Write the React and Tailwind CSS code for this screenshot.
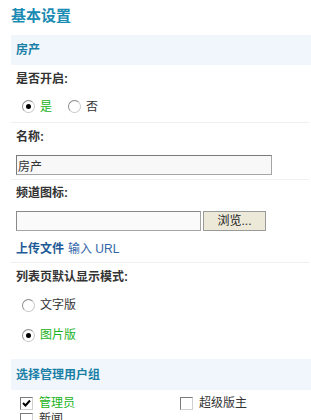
import { useState } from 'react';

function Radio({ checked, onClick }) {
  return (
    <span
      onClick={onClick}
      className="relative inline-block w-[13px] h-[13px] rounded-full border border-[#c8c8c8] bg-white cursor-pointer"
      style={{ borderTopColor: '#8a8a8a', borderLeftColor: '#8a8a8a' }}
    >
      {checked && <span className="absolute left-[3px] top-[3px] w-[5px] h-[5px] rounded-full bg-black" />}
    </span>
  );
}

function Check({ checked, onClick }) {
  return (
    <span
      onClick={onClick}
      className="relative inline-flex items-center justify-center w-[13px] h-[13px] border border-[#d0d0d0] bg-white cursor-pointer"
      style={{ borderTopColor: '#7a7a7a', borderLeftColor: '#7a7a7a' }}
    >
      {checked && (
        <svg width="9" height="9" viewBox="0 0 9 9">
          <path d="M1 4 L3.5 6.5 L8 1.5" fill="none" stroke="#000" strokeWidth="2" />
        </svg>
      )}
    </span>
  );
}

function App() {
  const [open, setOpen] = useState(true);
  const [mode, setMode] = useState('pic');
  const [groups, setGroups] = useState({ admin: true, super: false, news: false });

  const font = { fontFamily: '"Liberation Sans", "Noto Sans CJK SC", sans-serif' };

  return (
    <div className="w-[311px] h-[420px] overflow-hidden bg-white text-[12px] text-[#333]" style={font}>
      <div className="pl-[11px]">
        <h1 className="pt-[7px] h-[35px] text-[15px] font-bold text-[#1a8bb3] leading-[17px]">基本设置</h1>

        {/* 房产 */}
        <div className="h-[30px] bg-[#f0f6fc] pl-[5px] flex items-center text-[12px] font-bold text-[#1a7fa6]">房产</div>

        <div className="pl-[5px]">
          <div className="pt-[1px] h-[26px] font-bold flex items-center">是否开启:</div>
          <div className="h-[31px] flex items-center pl-[6px] gap-[5px]">
            <Radio checked={open} onClick={() => setOpen(true)} />
            <span className={open ? 'text-[#1bb31b] mr-[11px]' : 'mr-[11px]'}>是</span>
            <Radio checked={!open} onClick={() => setOpen(false)} />
            <span className={!open ? 'text-[#1bb31b]' : ''}>否</span>
          </div>
        </div>
        <div className="h-px bg-[#f0f0f0] mr-[2px]" />

        <div className="pl-[5px]">
          <div className="h-[28px] flex items-center font-bold">名称:</div>
          <div className="h-[28px] flex items-center">
            <input
              defaultValue="房产"
              className="w-[256px] h-[20px] border border-[#a5a5a5] bg-[#f8f8f8] px-[1px] text-[12px] text-[#333] outline-none"
              style={{ borderTopColor: '#7a7a7a', borderLeftColor: '#7a7a7a' }}
            />
          </div>
        </div>
        <div className="h-px bg-[#f0f0f0] mr-[2px]" />

        <div className="pl-[5px]">
          <div className="h-[26px] flex items-center font-bold">频道图标:</div>
          <div className="h-[30px] flex items-center gap-[2px]">
            <input
              className="w-[185px] h-[20px] border border-[#a5a5a5] bg-[#fafafa] outline-none"
              style={{ borderTopColor: '#8a8a8a', borderLeftColor: '#8a8a8a' }}
            />
            <button className="w-[63px] h-[20px] border border-[#9a9a9a] bg-[#ece9d8] text-[12px] text-[#222] leading-none">浏览...</button>
          </div>
          <div className="h-[26px] flex items-center gap-[4px]">
            <a className="font-bold text-[#1d5a96] cursor-pointer">上传文件</a>
            <a className="text-[#3366a8] cursor-pointer">输入 URL</a>
          </div>
        </div>
        <div className="h-px bg-[#f0f0f0] mr-[2px]" />

        <div className="pl-[5px]">
          <div className="h-[28px] flex items-center font-bold">列表页默认显示模式:</div>
          <div className="h-[28px] flex items-center pl-[6px] gap-[5px]">
            <Radio checked={mode === 'text'} onClick={() => setMode('text')} />
            <span className={mode === 'text' ? 'text-[#1bb31b]' : ''}>文字版</span>
          </div>
          <div className="h-[32px] flex items-center pl-[6px] gap-[5px]">
            <Radio checked={mode === 'pic'} onClick={() => setMode('pic')} />
            <span className={mode === 'pic' ? 'text-[#1bb31b]' : ''}>图片版</span>
          </div>
        </div>

        {/* 选择管理用户组 */}
        <div className="mt-[8px] h-[31px] bg-[#f0f6fc] pl-[5px] flex items-center text-[12px] font-bold text-[#1a7fa6]">选择管理用户组</div>

        <div className="pl-[9px] pt-[6px] grid grid-cols-[160px_1fr] gap-y-[2px]">
          {[
            ['admin', '管理员'],
            ['super', '超级版主'],
            ['news', '新闻'],
          ].map(([k, label]) => (
            <div key={k} className="flex items-center gap-[6px] h-[14px]">
              <Check checked={groups[k]} onClick={() => setGroups({ ...groups, [k]: !groups[k] })} />
              <span className={groups[k] ? 'text-[#1bb31b]' : ''}>{label}</span>
            </div>
          ))}
        </div>
      </div>
    </div>
  );
}

export default App;
